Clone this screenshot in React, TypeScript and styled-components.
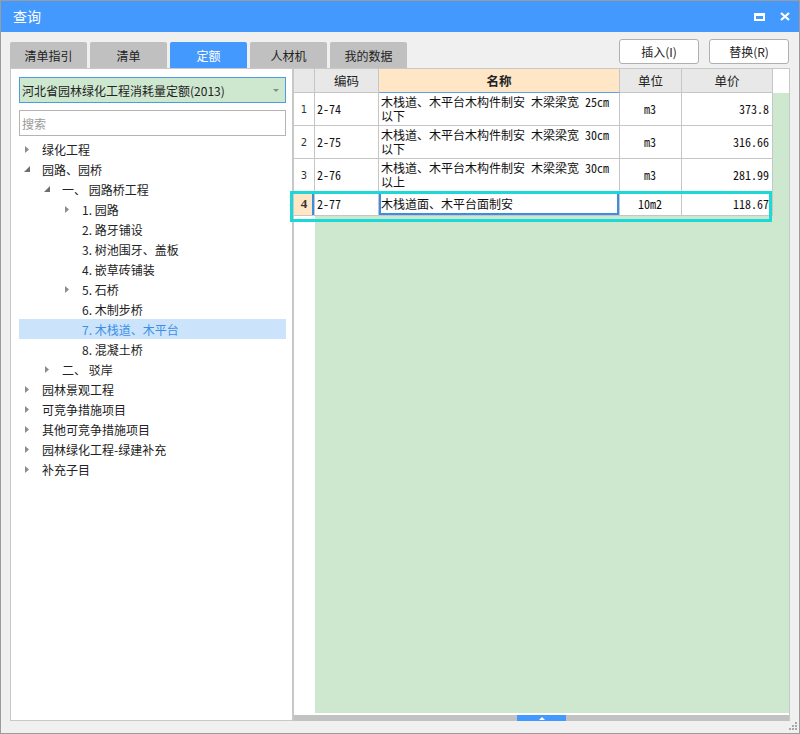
import React from "react";
import styled, { createGlobalStyle } from "styled-components";

const GlobalStyle = createGlobalStyle`
  html, body {
    margin: 0;
    padding: 0;
    background: #fff;
  }
  body {
    font-family: "Noto Sans CJK SC", "Noto Sans", sans-serif;
    font-size: 12px;
    color: #222;
  }
  * {
    box-sizing: border-box;
  }
`;

const Window = styled.div`
  position: relative;
  width: 800px;
  height: 734px;
  border: 1px solid #9c9c9c;
  background: #f0f0f0;
  display: flex;
  flex-direction: column;
`;

const TitleBar = styled.div`
  flex: none;
  height: 31px;
  background: #4499ff;
  color: #fff;
  display: flex;
  align-items: center;
  justify-content: space-between;
  padding: 0 9px 0 12px;
`;
const Title = styled.div`
  font-size: 14px;
  line-height: 31px;
`;
const TitleTools = styled.div`
  display: flex;
  align-items: center;
  gap: 15px;
`;
const MaxIcon = styled.span`
  display: block;
  width: 11px;
  height: 8px;
  border: 2px solid #fff;
  border-top-width: 3px;
`;

const Body = styled.div`
  flex: 1;
  display: flex;
  flex-direction: column;
  padding: 0 9px 12px 9px;
`;

const TopRow = styled.div`
  flex: none;
  height: 36px;
  display: flex;
  justify-content: space-between;
`;
const Tabs = styled.div`
  align-self: flex-end;
  display: flex;
  gap: 3px;
`;
const Tab = styled.div<{ $active?: boolean }>`
  width: 77px;
  height: 26px;
  border-radius: 2px 2px 0 0;
  background: ${(p) => (p.$active ? "#4499ff" : "#c0c0c0")};
  color: ${(p) => (p.$active ? "#fff" : "#222")};
  display: flex;
  align-items: center;
  justify-content: center;
  font-size: 12px;
`;
const Buttons = styled.div`
  display: flex;
  gap: 10px;
  margin-top: 7px;
  margin-right: 1px;
`;
const Button = styled.div`
  width: 80px;
  height: 25px;
  background: #fff;
  border: 1px solid #b0b0b0;
  border-radius: 3px;
  display: flex;
  align-items: center;
  justify-content: center;
  font-size: 12px;
  color: #222;
`;

const Main = styled.div`
  flex: none;
  height: 653px;
  display: flex;
`;

const LeftPanel = styled.div`
  width: 283px;
  border: 1px solid #c8c8c8;
  background: #fff;
  padding: 8px 6px 0 8px;
  display: flex;
  flex-direction: column;
`;
const Select = styled.div`
  height: 26px;
  background: #cee8d0;
  border: 1px solid #4a9be8;
  display: flex;
  align-items: center;
  justify-content: space-between;
  padding: 0 6px 0 2px;
  font-size: 12px;
  color: #222;
`;
const Search = styled.div`
  height: 26px;
  margin-top: 7px;
  border: 1px solid #b4b4b4;
  display: flex;
  align-items: center;
  padding-left: 2px;
  font-size: 12px;
  color: #9a9a9a;
`;
const Tree = styled.div`
  margin-top: 3px;
`;
const TreeRow = styled.div<{ $level: number; $selected?: boolean }>`
  height: 20px;
  display: flex;
  align-items: center;
  padding-left: ${(p) => 4 + p.$level * 20}px;
  background: ${(p) => (p.$selected ? "#cce4fb" : "transparent")};
  color: ${(p) => (p.$selected ? "#3d8fe6" : "#222")};
  font-size: 12px;
  white-space: pre;
`;
const Arrow = styled.span`
  flex: none;
  width: 8px;
  height: 8px;
  margin-right: 11px;
  display: flex;
  align-items: center;
  justify-content: center;
`;

const RightPanel = styled.div`
  width: 497px;
  border: 1px solid #c8c8c8;
  border-bottom: none;
  background: #fff;
  display: flex;
  flex-direction: column;
`;
const GridArea = styled.div`
  position: relative;
  flex: 1;
  display: grid;
  grid-template-columns: 21px 64px 241px 62px 91px 1fr;
  grid-template-rows: 24px 33px 33px 33px 24px 1fr;
  padding-bottom: 2px;
`;
const HeadCell = styled.div<{ $main?: boolean }>`
  border-right: 1px solid #c6c6c6;
  border-bottom: 1px solid ${(p) => (p.$main ? "#5ca0f0" : "#c6c6c6")};
  background: ${(p) => (p.$main ? "#fee6c7" : "#e8e8e8")};
  font-weight: ${(p) => (p.$main ? 700 : 400)};
  display: flex;
  align-items: center;
  justify-content: center;
  font-size: 12.5px;
  color: #222;
`;
const NumCell = styled.div<{ $current?: boolean }>`
  border-right: 1px solid #c6c6c6;
  border-bottom: 1px solid #c6c6c6;
  background: ${(p) => (p.$current ? "#fee6c7" : "#fff")};
  box-shadow: ${(p) => (p.$current ? "inset -2px 0 0 #3a8ee6" : "none")};
  display: flex;
  align-items: center;
  justify-content: center;
  font-family: ${(p) =>
    p.$current ? `"Liberation Serif", serif` : `"DejaVu Sans", sans-serif`};
  font-weight: ${(p) => (p.$current ? 700 : 400)};
  font-size: ${(p) => (p.$current ? "13px" : "10px")};
  color: #333;
`;
const Cell = styled.div<{ $align?: "left" | "center" | "right"; $focus?: boolean }>`
  border-right: 1px solid #c6c6c6;
  border-bottom: 1px solid #c6c6c6;
  background: #fff;
  box-shadow: ${(p) => (p.$focus ? "inset 0 0 0 2px #3a8ee6" : "none")};
  display: flex;
  flex-direction: column;
  justify-content: center;
  align-items: ${(p) =>
    p.$align === "right" ? "flex-end" : p.$align === "center" ? "center" : "flex-start"};
  padding: 0 3px 0 2px;
  font-family: "Noto Sans Mono CJK SC", "Liberation Mono", "Noto Sans CJK SC", monospace;
  font-size: 12px;
  line-height: 14px;
  color: #111;
  white-space: nowrap;
`;
const HeadFill = styled.div`
  background: #fff;
`;
const SideFill = styled.div`
  grid-column: 6;
  grid-row: 2 / 6;
  background: #cee8d0;
`;
const BottomFill = styled.div`
  grid-column: 2 / -1;
  grid-row: 6;
  background: #cee8d0;
`;
const RowMark = styled.div`
  position: absolute;
  top: 122px;
  left: -4px;
  width: 482px;
  height: 31px;
  border: 3px solid #1ed8d8;
  pointer-events: none;
  z-index: 2;
`;
const HScroll = styled.div`
  flex: none;
  height: 6px;
  background: #c2c2c2;
  display: flex;
  justify-content: center;
`;
const Thumb = styled.div`
  width: 49px;
  height: 6px;
  background: #4499ff;
  display: flex;
  align-items: center;
  justify-content: center;
`;
const Grip = styled.svg`
  position: absolute;
  right: 1px;
  bottom: 1px;
`;

type Node = { level: number; label: string; state: "open" | "closed" | "leaf"; selected?: boolean };

const tree: Node[] = [
  { level: 0, label: "绿化工程", state: "closed" },
  { level: 0, label: "园路、园桥", state: "open" },
  { level: 1, label: "一、 园路桥工程", state: "open" },
  { level: 2, label: "1. 园路", state: "closed" },
  { level: 2, label: "2. 路牙铺设", state: "leaf" },
  { level: 2, label: "3. 树池围牙、盖板", state: "leaf" },
  { level: 2, label: "4. 嵌草砖铺装", state: "leaf" },
  { level: 2, label: "5. 石桥", state: "closed" },
  { level: 2, label: "6. 木制步桥", state: "leaf" },
  { level: 2, label: "7. 木栈道、木平台", state: "leaf", selected: true },
  { level: 2, label: "8. 混凝土桥", state: "leaf" },
  { level: 1, label: "二、 驳岸", state: "closed" },
  { level: 0, label: "园林景观工程", state: "closed" },
  { level: 0, label: "可竞争措施项目", state: "closed" },
  { level: 0, label: "其他可竞争措施项目", state: "closed" },
  { level: 0, label: "园林绿化工程-绿建补充", state: "closed" },
  { level: 0, label: "补充子目", state: "closed" },
];

const rows = [
  { code: "2-74", name: ["木栈道、木平台木构件制安 木梁梁宽 25cm", "以下"], unit: "m3", price: "373.8" },
  { code: "2-75", name: ["木栈道、木平台木构件制安 木梁梁宽 30cm", "以下"], unit: "m3", price: "316.66" },
  { code: "2-76", name: ["木栈道、木平台木构件制安 木梁梁宽 30cm", "以上"], unit: "m3", price: "281.99" },
  { code: "2-77", name: ["木栈道面、木平台面制安"], unit: "10m2", price: "118.67" },
];

const tabs = ["清单指引", "清单", "定额", "人材机", "我的数据"];

const TreeArrow: React.FC<{ state: Node["state"] }> = ({ state }) => {
  if (state === "leaf") return <Arrow />;
  if (state === "open")
    return (
      <Arrow>
        <svg width="6" height="6" viewBox="0 0 6 6">
          <polygon points="6,0 6,6 0,6" fill="#6e6e6e" />
        </svg>
      </Arrow>
    );
  return (
    <Arrow>
      <svg width="4" height="7" viewBox="0 0 4 7">
        <polygon points="0,0 4,3.5 0,7" fill="#8c8c8c" />
      </svg>
    </Arrow>
  );
};

const App: React.FC = () => {
  return (
    <>
      <GlobalStyle />
      <Window>
        <TitleBar>
          <Title>查询</Title>
          <TitleTools>
            <MaxIcon />
            <svg width="10" height="9" viewBox="0 0 10 9">
              <path d="M1 1 L9 8 M9 1 L1 8" stroke="#fff" strokeWidth="2.2" />
            </svg>
          </TitleTools>
        </TitleBar>
        <Body>
          <TopRow>
            <Tabs>
              {tabs.map((t, i) => (
                <Tab key={t} $active={i === 2}>
                  {t}
                </Tab>
              ))}
            </Tabs>
            <Buttons>
              <Button>插入(I)</Button>
              <Button>替换(R)</Button>
            </Buttons>
          </TopRow>
          <Main>
            <LeftPanel>
              <Select>
                <span>河北省园林绿化工程消耗量定额(2013)</span>
                <svg width="6" height="3" viewBox="0 0 6 3">
                  <polygon points="0,0 6,0 3,3" fill="#8a8a8a" />
                </svg>
              </Select>
              <Search>搜索</Search>
              <Tree>
                {tree.map((n) => (
                  <TreeRow key={n.label} $level={n.level} $selected={n.selected}>
                    <TreeArrow state={n.state} />
                    {n.label}
                  </TreeRow>
                ))}
              </Tree>
            </LeftPanel>
            <RightPanel>
              <GridArea>
                <HeadCell />
                <HeadCell>编码</HeadCell>
                <HeadCell $main>名称</HeadCell>
                <HeadCell>单位</HeadCell>
                <HeadCell>单价</HeadCell>
                <HeadFill />
                {rows.map((r, i) => {
                  const current = i === rows.length - 1;
                  return (
                    <React.Fragment key={r.code}>
                      <NumCell $current={current} style={{ gridColumn: 1, gridRow: i + 2 }}>
                        {i + 1}
                      </NumCell>
                      <Cell style={{ gridColumn: 2, gridRow: i + 2 }}>{r.code}</Cell>
                      <Cell $focus={current} style={{ gridColumn: 3, gridRow: i + 2 }}>
                        {r.name.map((line) => (
                          <div key={line}>{line}</div>
                        ))}
                      </Cell>
                      <Cell $align="center" style={{ gridColumn: 4, gridRow: i + 2 }}>
                        {r.unit}
                      </Cell>
                      <Cell $align="right" style={{ gridColumn: 5, gridRow: i + 2 }}>
                        {r.price}
                      </Cell>
                    </React.Fragment>
                  );
                })}
                <SideFill />
                <BottomFill />
                <RowMark />
              </GridArea>
              <HScroll>
                <Thumb>
                  <svg width="6" height="3" viewBox="0 0 6 3">
                    <polygon points="3,0 6,3 0,3" fill="#fff" />
                  </svg>
                </Thumb>
              </HScroll>
            </RightPanel>
          </Main>
        </Body>
        <Grip width="10" height="10" viewBox="0 0 10 10">
          {[
            [7, 0],
            [4, 3],
            [7, 3],
            [1, 6],
            [4, 6],
            [7, 6],
          ].map(([x, y]) => (
            <rect key={`${x}-${y}`} x={x} y={y} width="2" height="2" fill="#a8a8a8" />
          ))}
        </Grip>
      </Window>
    </>
  );
};

export default App;
